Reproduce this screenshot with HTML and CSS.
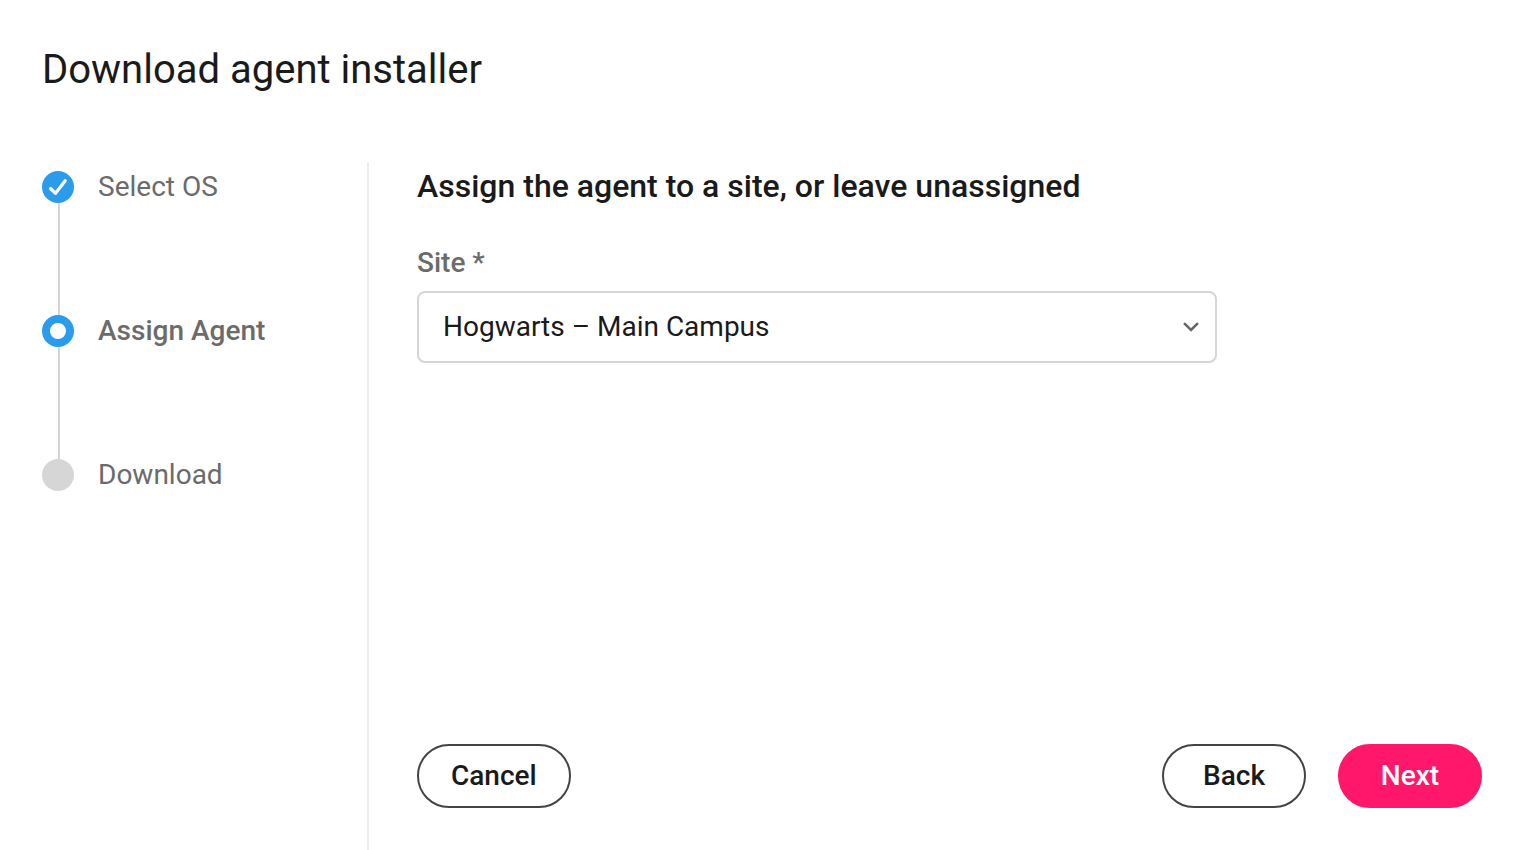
FILE: index.html
```html
<!DOCTYPE html>
<html lang="en">
<head>
    <meta charset="UTF-8">
    <meta name="viewport" content="width=device-width, initial-scale=1.0">
    <title>Download agent installer</title>
    <link rel="stylesheet" href="styles.css">
</head>
<body>
    <div class="dialog">
        <header>
            <h1>Download agent installer</h1>
        </header>
        <main>
            <ol class="steps">
                <li class="step done">
                    <span class="marker">
                        <svg width="32" height="32" viewBox="0 0 32 32" aria-hidden="true">
                            <path d="M8.5 17.5L13.5 22.3L23.2 9.8" fill="none" stroke="#fff" stroke-width="3.2" stroke-linecap="round" stroke-linejoin="round"/>
                        </svg>
                    </span>
                    <span class="step-name">Select OS</span>
                </li>
                <li class="step current" aria-current="step">
                    <span class="marker"></span>
                    <span class="step-name">Assign Agent</span>
                </li>
                <li class="step">
                    <span class="marker"></span>
                    <span class="step-name">Download</span>
                </li>
            </ol>
            <form class="panel">
                <h2>Assign the agent to a site, or leave unassigned</h2>
                <label for="site">Site *</label>
                <div class="select-box">
                    <select id="site" name="site" required>
                        <option>Hogwarts – Main Campus</option>
                    </select>
                    <svg class="arrow" width="16" height="10" viewBox="0 0 16 10" aria-hidden="true">
                        <path d="M1.8 1.8L8 8L14.2 1.8" fill="none" stroke="#666" stroke-width="2.6" stroke-linecap="round"/>
                    </svg>
                </div>
                <div class="actions">
                    <button type="button" class="cancel">Cancel</button>
                    <button type="button">Back</button>
                    <button type="submit" class="next">Next</button>
                </div>
            </form>
        </main>
    </div>
</body>
</html>
```

FILE: styles.css
```css
* {
    box-sizing: border-box;
}

body {
    font-family: Roboto, "Liberation Sans", sans-serif;
    margin: 0;
    background-color: #fff;
    color: #1a1a1a;
}

.dialog {
    display: flex;
    flex-direction: column;
    min-height: 100vh;
    padding: 0 42px;
}

header {
    padding: 46px 0 68px;
}

h1 {
    margin: 0;
    font-size: 40px;
    font-weight: 400;
    line-height: 48px;
}

main {
    display: flex;
    flex: 1;
}

.steps {
    width: 327px;
    margin: 0;
    padding: 9px 0 0;
    border-right: 2px solid #ececec;
    list-style: none;
}

.step {
    display: flex;
    gap: 24px;
    position: relative;
    height: 144px;
    color: #6b6b6b;
    font-size: 28px;
    line-height: 32px;
}

.step:not(:last-child)::after {
    content: "";
    position: absolute;
    top: 32px;
    bottom: 0;
    left: 16px;
    width: 2px;
    background-color: #d6d6d6;
}

.marker {
    width: 32px;
    height: 32px;
    border-radius: 50%;
    background-color: #d6d6d6;
}

.marker svg {
    display: block;
}

.done .marker {
    background-color: #2b9ceb;
}

.current .marker {
    border: 8px solid #2b9ceb;
    background-color: #fff;
}

.current .step-name {
    font-weight: 500;
}

.panel {
    display: flex;
    flex: 1;
    flex-direction: column;
    padding: 4px 0 42px 48px;
}

h2 {
    margin: 0 0 37px;
    font-size: 32px;
    font-weight: 500;
    line-height: 40px;
}

label {
    margin-bottom: 8px;
    color: #6b6b6b;
    font-size: 28px;
    font-weight: 500;
    line-height: 40px;
}

.select-box {
    position: relative;
    max-width: 800px;
}

select {
    width: 100%;
    height: 72px;
    padding: 0 56px 2px 24px;
    border: 2px solid #d6d6d6;
    border-radius: 8px;
    background-color: #fff;
    color: inherit;
    font-family: inherit;
    font-size: 28px;
    appearance: none;
}

.arrow {
    position: absolute;
    top: 31px;
    right: 18px;
    pointer-events: none;
}

.actions {
    display: flex;
    gap: 32px;
    margin-top: auto;
}

button {
    min-width: 144px;
    height: 64px;
    padding: 0 32px 2px;
    border: 2px solid #444;
    border-radius: 32px;
    background-color: #fff;
    color: inherit;
    font-family: inherit;
    font-size: 28px;
    font-weight: 500;
    cursor: pointer;
}

.cancel {
    margin-right: auto;
}

.next {
    border-color: #ff176b;
    background-color: #ff176b;
    color: #fff;
}
```
